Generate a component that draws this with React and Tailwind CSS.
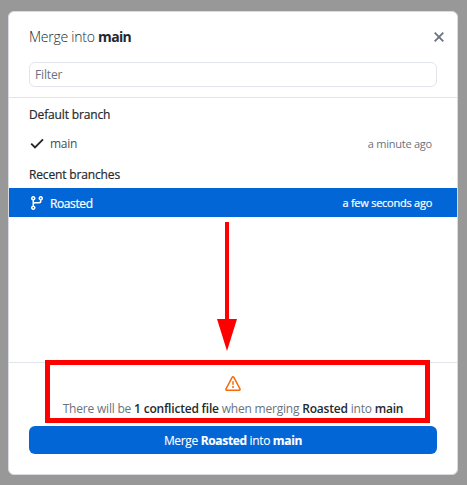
const GitBranchIcon = () => (
  <svg className="size-4" viewBox="0 0 16 16" fill="currentColor">
    <path d="M9.5 3.25a2.25 2.25 0 1 1 3 2.122V6A2.5 2.5 0 0 1 10 8.5H6a1 1 0 0 0-1 1v1.128a2.251 2.251 0 1 1-1.5 0V5.372a2.25 2.25 0 1 1 1.5 0v1.836A2.493 2.493 0 0 1 6 7h4a1 1 0 0 0 1-1v-.628A2.25 2.25 0 0 1 9.5 3.25Zm-6 0a.75.75 0 1 0 1.5 0 .75.75 0 0 0-1.5 0Zm8.25-.75a.75.75 0 1 0 0 1.5.75.75 0 0 0 0-1.5ZM4.25 12a.75.75 0 1 0 0 1.5.75.75 0 0 0 0-1.5Z" />
  </svg>
);

const CheckIcon = () => (
  <svg className="size-4 text-[#24292e]" viewBox="0 0 16 16" fill="none" stroke="currentColor" strokeWidth="1.9">
    <path d="M2.2 7.6 6 11.4 14 3.4" />
  </svg>
);

const CloseIcon = () => (
  <svg className="h-[10px] w-[10px]" viewBox="0 0 10 10" fill="none" stroke="#6a737d" strokeWidth="1.8">
    <path d="M0.7 0.7 9.3 9.3M9.3 0.7 0.7 9.3" />
  </svg>
);

const AlertIcon = () => (
  <svg className="size-4" viewBox="0 0 16 16" fill="#f66a0a">
    <path d="M6.457 1.047c.659-1.234 2.427-1.234 3.086 0l6.082 11.378A1.75 1.75 0 0 1 14.082 15H1.918a1.75 1.75 0 0 1-1.543-2.575Zm1.763.707a.25.25 0 0 0-.44 0L1.698 13.132a.25.25 0 0 0 .22.368h12.164a.25.25 0 0 0 .22-.368Zm.53 3.996v2.5a.75.75 0 0 1-1.5 0v-2.5a.75.75 0 0 1 1.5 0ZM9 11a1 1 0 1 1-2 0 1 1 0 0 1 2 0Z" />
  </svg>
);

function Heading({ children }) {
  return (
    <div className="flex h-[30px] items-center px-5 pt-[3px] tracking-[-0.15px] text-[#24292e] [-webkit-text-stroke:0.2px]">
      {children}
    </div>
  );
}

export default function App() {
  return (
    <div className="relative h-[485px] w-[467px] overflow-hidden bg-[#989898] px-2 pt-[11px] font-['Open_Sans','Noto_Sans',sans-serif] text-[12px] leading-4 whitespace-nowrap">
      <div className="flex h-[464px] w-[450px] flex-col overflow-hidden rounded-md border border-[#d8dce1] bg-white">
        <header className="flex h-[50px] items-start justify-between pt-[15px] pr-[13px] pl-5">
          <h1 className="text-[14px] leading-5 font-light tracking-[-0.25px] text-[#24292e]">
            Merge into <strong className="font-bold tracking-[-0.65px]">main</strong>
          </h1>
          <button aria-label="Close" className="mt-[5px]"><CloseIcon /></button>
        </header>
        <div className="h-[36px] border-b border-[#e1e4e8] px-5">
          <input
            placeholder="Filter"
            className="block h-[25px] w-[408px] rounded-md border border-[#e1e4e8] px-[5px] text-[12px] tracking-[-0.15px] placeholder:text-[#6a737d]"
          />
        </div>
        <main className="h-[264px]">
          <Heading>Default branch</Heading>
          <div className="flex h-[30px] items-center px-5 pt-[2px] text-[#444d56]">
            <CheckIcon />
            <span className="ml-[5px] tracking-[-0.3px]">main</span>
            <span className="mr-[5px] ml-auto text-[11px] tracking-[-0.23px] text-[#6a737d]">a minute ago</span>
          </div>
          <Heading>Recent branches</Heading>
          <div className="flex h-[29px] items-center bg-[#0366d6] px-5 text-white [-webkit-text-stroke:0.2px]">
            <GitBranchIcon />
            <span className="mt-[2px] ml-[5px] tracking-[-0.4px]">Roasted</span>
            <span className="mr-[5px] ml-auto text-[11px] tracking-[-0.25px]">a few seconds ago</span>
          </div>
        </main>
        <footer className="flex flex-1 flex-col items-center border-t border-[#e1e4e8] px-5 pt-[13px]">
          <AlertIcon />
          <p className="mt-[9px] tracking-[-0.2px] text-[#6a737d]">
            There will be <strong className="font-semibold text-[#24292e]">1 conflicted file</strong> when merging{" "}
            <strong className="font-semibold text-[#24292e]">Roasted</strong> into{" "}
            <strong className="font-semibold text-[#24292e]">main</strong>
          </p>
          <button className="mt-[9px] h-7 w-[408px] rounded-md bg-[#0366d6] pt-[2px] tracking-[-0.34px] text-white [-webkit-text-stroke:0.1px]">
            Merge <strong className="font-bold">Roasted</strong> into <strong className="font-bold">main</strong>
          </button>
        </footer>
      </div>
      <div className="pointer-events-none absolute top-[360px] left-[45px] h-[63px] w-[385px] border-5 border-[#ff0000]" />
      <svg className="pointer-events-none absolute top-[222px] left-[217px]" width="20" height="130" viewBox="0 0 20 130" fill="#ff0000">
        <path d="M8 0H12V97H20L10 129L0 97H8Z" />
      </svg>
    </div>
  );
}
